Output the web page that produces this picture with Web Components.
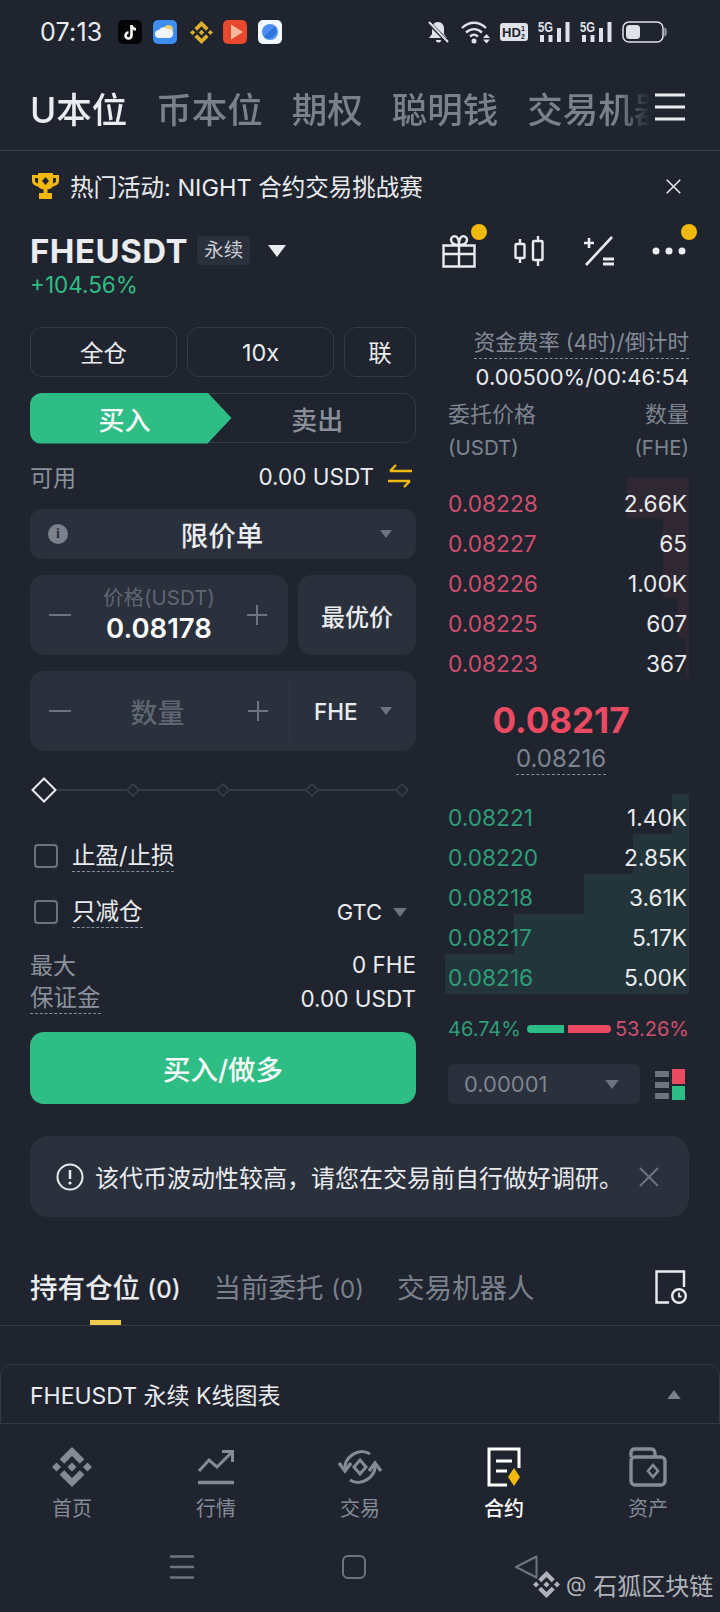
<!DOCTYPE html>
<html lang="zh-CN">
<head>
<meta charset="utf-8">
<title>FHEUSDT</title>
<style>
    html, body { margin: 0; padding: 0; }
    body {
        position: relative;
        width: 720px;
        height: 1612px;
        overflow: hidden;
        background: #1f242e;
        color: #eaecef;
        font-family: Inter, "Noto Sans CJK SC", sans-serif;
    }
    .main {
        display: grid;
        grid-template-columns: 386px 241px;
        column-gap: 32px;
        padding: 32px 0 0 30px;
    }
</style>
</head>
<body>
<status-bar></status-bar>
<top-tabs></top-tabs>
<promo-banner>热门活动: NIGHT 合约交易挑战赛</promo-banner>
<pair-header></pair-header>
<div class="main">
    <order-form></order-form>
    <order-book></order-book>
</div>
<risk-notice>该代币波动性较高，请您在交易前自行做好调研。</risk-notice>
<position-tabs></position-tabs>
<chart-bar>FHEUSDT 永续 K线图表</chart-bar>
<bottom-nav></bottom-nav>
<gesture-bar></gesture-bar>
<water-mark></water-mark>

<script>
const BNB_PATH = 'M38.73 53.2l24.59-24.58 24.6 24.6 14.3-14.31L63.32 0 24.43 38.9l14.3 14.3zM0 63.31l14.3-14.31 14.31 14.31-14.31 14.3zM38.73 73.41l24.59 24.59 24.6-24.6 14.31 14.29-38.9 38.91-38.91-38.88-.02-.02 14.33-14.29zM98.01 63.32l14.3-14.31 14.3 14.3-14.3 14.32zM77.83 63.3l-14.51-14.52-10.73 10.73-1.24 1.23-2.54 2.54 14.51 14.5 14.51-14.47v-.01z';

const caret = (w, h, color) => `<svg width="${w}" height="${h}" viewBox="0 0 12 8"><path d="M0 0H12L6 8Z" fill="${color}"/></svg>`;

const closeIcon = (size, color, sw) => `<svg width="${size}" height="${size}" viewBox="0 0 20 20"><path d="M1 1L19 19M19 1L1 19" stroke="${color}" stroke-width="${sw}" fill="none"/></svg>`;

class BaseElement extends HTMLElement {
    constructor() {
        super();
        this.attachShadow({ mode: 'open' });
    }
    connectedCallback() {
        this.render();
    }
}

class StatusBar extends BaseElement {
    render() {
        const signal = `<svg width="32" height="22" viewBox="0 0 32 22" style="overflow:visible"><text x="0" y="11" font-size="14" font-weight="700" textLength="15" lengthAdjust="spacingAndGlyphs" fill="#dfe2e8" font-family="Liberation Sans">5G</text>
            <path d="M2 14h4v7H2zM10.500 14h4v7h-4zM19 7h4v14h-4zM27.500 1h4v20h-4z" fill="#dfe2e8"/></svg>`;
        this.shadowRoot.innerHTML = `
            <style>
                :host { display: flex; align-items: center; height: 64px; box-sizing: border-box; padding: 0 0 0 40px; }
                .time { font-size: 25px; width: 78px; letter-spacing: .2px; }
                .apps { display: flex; align-items: center; }
                .apps svg { display: block; }
                .sys { display: flex; align-items: center; margin-left: auto; padding-right: 53px; gap: 10px; }
                .sys svg { display: block; }
            </style>
            <div class="time">07:13</div>
            <div class="apps">
                <svg width="24" height="24" viewBox="0 0 24 24" style="margin-right:11px"><rect width="24" height="24" rx="5" fill="#050507"/>
                    <path d="M13.500 5v10.500a3 3 0 1 1-3-3" stroke="#fff" stroke-width="2.600" fill="none"/><path d="M13.500 5.500c.5 2.500 2 3.700 4.500 4" stroke="#fff" stroke-width="2.600" fill="none"/></svg>
                <svg width="24" height="24" viewBox="0 0 24 24" style="margin-right:13px"><rect width="24" height="24" rx="5" fill="#3d8ef0"/>
                    <circle cx="15.500" cy="9.500" r="4.500" fill="#f5cf6a"/><path d="M6 18a4 4 0 0 1 0-8c1-3 6-4 8-1a4.500 4.500 0 0 1 3 9z" fill="#f2f6fc"/></svg>
                <svg width="23" height="23" viewBox="0 0 126.610 126.610" style="margin-right:10px"><path d="${BNB_PATH}" fill="#e0b02c"/></svg>
                <svg width="24" height="24" viewBox="0 0 24 24" style="margin-right:11px"><rect width="24" height="24" rx="5" fill="#e8492c"/>
                    <path d="M8 4.500L20 12L8 19.500Z" fill="#f6b9a0"/></svg>
                <svg width="24" height="24" viewBox="0 0 24 24"><rect width="24" height="24" rx="5" fill="#f4f8ff"/>
                    <circle cx="12" cy="12" r="8" fill="#4a8ff0"/><path d="M6 17L17 6a8 8 0 0 1-11 11z" fill="#2f74dc"/></svg>
            </div>
            <div class="sys">
                <svg width="21" height="24" viewBox="0 0 21 24"><path d="M10 2c-4 0-6 3-6 7v5l-3 4h18l-3-4V9c0-4-2-7-6-7zM8 20h5a2.500 2.500 0 0 1-5 0z" fill="#dfe2e8"/><path d="M1 3L20 22" stroke="#1f242e" stroke-width="4"/><path d="M1 2L20 22" stroke="#dfe2e8" stroke-width="2"/></svg>
                <svg width="29" height="24" viewBox="0 0 29 24" style="margin-left:2px"><path d="M1 8c7-7 17-7 24 0M5 12.500c5-4.500 11-4.500 16 0M9 16.500c3-2.500 5-2.500 8 0" stroke="#dfe2e8" stroke-width="2.400" fill="none"/><circle cx="13" cy="21" r="2.500" fill="#dfe2e8"/><path d="M22 18h7l-3.500-4zM22 19.500h7l-3.500 4z" fill="#dfe2e8"/></svg>
                <svg width="28" height="18" viewBox="0 0 28 18"><rect width="28" height="18" rx="3" fill="#dfe2e8"/><text x="2" y="14" font-size="13" font-weight="700" fill="#1f242e" font-family="Liberation Sans">HD</text><text x="21" y="8" font-size="7" font-weight="700" fill="#1f242e" font-family="Liberation Sans">1</text><text x="21" y="16" font-size="7" font-weight="700" fill="#1f242e" font-family="Liberation Sans">2</text></svg>
                ${signal}
                ${signal}
                <svg width="45" height="22" viewBox="0 0 45 22"><rect x="1" y="1" width="40" height="20" rx="6" stroke="#dfe2e8" stroke-width="1.500" fill="none"/><rect x="4" y="4" width="14" height="14" rx="3.500" fill="#dfe2e8"/><path d="M43 7.500c1.500.5 1.500 6.500 0 7z" stroke="#8d929b" stroke-width="1.500" fill="none"/></svg>
            </div>
        `;
    }
}

class TopTabs extends BaseElement {
    render() {
        this.shadowRoot.innerHTML = `
            <style>
                :host { display: flex; align-items: center; height: 87px; box-sizing: border-box; padding: 0 35px 0 30px; border-bottom: 1px solid #3a404c; }
                .scroll { display: flex; gap: 29px; flex: 1; overflow: hidden; white-space: nowrap; font-size: 35.500px; font-weight: 500; color: #7b818c;
                    -webkit-mask-image: linear-gradient(90deg, #000 590px, transparent 620px); mask-image: linear-gradient(90deg, #000 590px, transparent 620px); }
                .on { color: #eaecef; }
                svg { display: block; flex: none; }
            </style>
            <div class="scroll">
                <span class="on">U本位</span><span>币本位</span><span>期权</span><span>聪明钱</span><span>交易机器人</span>
            </div>
            <svg width="30" height="28" viewBox="0 0 30 28"><path d="M0 2H30M0 14H30M0 26H30" stroke="#eaecef" stroke-width="3"/></svg>
        `;
    }
}

class PromoBanner extends BaseElement {
    render() {
        this.shadowRoot.innerHTML = `
            <style>
                :host { display: flex; align-items: center; height: 74px; box-sizing: border-box; padding: 0 39px 4px 32px; }
                .text { font-size: 23.500px; color: #eaecef; margin-left: 11px; flex: 1; white-space: nowrap; }
                svg { display: block; flex: none; }
            </style>
            <svg width="27" height="26" viewBox="0 0 27 26"><path d="M6 0H21V2H27V8C27 11 24 13 21 13.500C20 15 18 16 15.500 16.500V20H20V26H7V20H11.500V16.500C9 16 7 15 6 13.500C3 13 0 11 0 8V2H6ZM3 5V8C3 9 4.500 10 6 10.500V5ZM24 5H21V10.500C22.500 10 24 9 24 8Z" fill="#f0b90b"/><path d="M13.500 4L17 8L13.500 12L10 8Z" fill="#1f242e"/></svg>
            <div class="text"><slot></slot></div>
            ${closeIcon(15, '#eaecef', 2)}
        `;
    }
}

class PairHeader extends BaseElement {
    render() {
        this.shadowRoot.innerHTML = `
            <style>
                :host { display: block; padding: 0 35px 0 30px; }
                .row { display: flex; align-items: center; height: 50px; padding-top: 1px; box-sizing: border-box; }
                .name { font-size: 33px; font-weight: 700; color: #eaecef; letter-spacing: .5px; }
                .chip { font-size: 19.500px; line-height: 29px; padding: 0 7px; margin-left: 9px; background: #2a303c; border-radius: 4px; color: #c9ccd3; }
                .row > svg.tri { margin-left: 18px; }
                .icons { display: flex; align-items: center; margin-left: auto; position: relative; }
                .icons svg { display: block; }
                .dot { position: absolute; width: 16px; height: 16px; border-radius: 50%; background: #f0b90b; top: -10px; }
                .change { font-size: 22.500px; line-height: 20px; color: #2ebd85; }
            </style>
            <div class="row">
                <span class="name">FHEUSDT</span>
                <span class="chip">永续</span>
                <svg class="tri" width="18" height="12" viewBox="0 0 12 8"><path d="M0 0H12L6 8Z" fill="#eaecef"/></svg>
                <div class="icons">
                    <svg width="34" height="34" viewBox="0 0 34 34" fill="none" stroke="#eaecef" stroke-width="2.400"><path d="M1.500 11.500H32.500V32.500H1.500ZM1.500 20H32.500M17 11.500V32.500"/><path d="M17 11C12 11 9 9 9 5.500C9 3 12 1.500 14 2.500C16 3.500 17 7 17 11C17 7 18 3.500 20 2.500C22 1.500 25 3 25 5.500C25 9 22 11 17 11Z"/></svg>
                    <svg style="margin-left:38px" width="30" height="32" viewBox="0 0 30 32" fill="none" stroke="#eaecef" stroke-width="2.400"><rect x="1.500" y="9" width="9" height="14" rx="1"/><path d="M6 4V9M6 23V28"/><rect x="19" y="6" width="9.500" height="19" rx="1"/><path d="M24 1V6M24 25V31"/></svg>
                    <svg style="margin-left:40px" width="30" height="30" viewBox="0 0 30 30" fill="none" stroke="#eaecef" stroke-width="2.600"><path d="M0 7H10M5 2V12"/><path d="M28 1L2 29"/><path d="M19 23H30M19 28H30" stroke-width="3"/></svg>
                    <svg style="margin-left:38px;margin-right:-1px" width="34" height="8" viewBox="0 0 34 8"><circle cx="4" cy="4" r="3.500" fill="#eaecef"/><circle cx="17" cy="4" r="3.500" fill="#eaecef"/><circle cx="30" cy="4" r="3.500" fill="#eaecef"/></svg>
                    <i class="dot" style="left:29px"></i>
                    <i class="dot" style="left:239px"></i>
                </div>
            </div>
            <div class="change">+104.56%</div>
        `;
    }
}

class StepField extends BaseElement {
    render() {
        const color = '#6d7480';
        this.shadowRoot.innerHTML = `
            <style>
                :host { display: flex; align-items: center; flex: 1; height: 80px; box-sizing: border-box; padding: 0 21px 0 19px; }
                svg { display: block; flex: none; }
                .mid { flex: 1; text-align: center; }
            </style>
            <svg width="22" height="20" viewBox="0 0 22 20"><path d="M0 10H22" stroke="${color}" stroke-width="2"/></svg>
            <div class="mid"><slot></slot></div>
            <svg width="20" height="20" viewBox="0 0 20 20"><path d="M0 10H20M10 0V20" stroke="${color}" stroke-width="2"/></svg>
        `;
    }
}

class CheckRow extends BaseElement {
    render() {
        this.shadowRoot.innerHTML = `
            <style>
                :host { display: flex; align-items: center; height: 56px; padding-left: 4px; }
                .box { width: 24px; height: 24px; box-sizing: border-box; border: 2px solid #6c727e; border-radius: 4px; margin-right: 14px; }
                .label { font-size: 23.500px; line-height: 30px; color: #eaecef; border-bottom: 1px dashed #848e9c; }
                .right { margin-left: auto; }
            </style>
            <div class="box"></div>
            <span class="label"><slot></slot></span>
            <div class="right"><slot name="right"></slot></div>
        `;
    }
}

class OrderForm extends BaseElement {
    render() {
        const dia = `<svg width="14" height="14" viewBox="0 0 14 14"><path d="M7 1L13 7L7 13L1 7Z" fill="#1f242e" stroke="#3a404c" stroke-width="1.500"/></svg>`;
        this.shadowRoot.innerHTML = `
            <style>
                :host { display: block; color: #eaecef; }
                svg { display: block; flex: none; }
                .modes { display: flex; gap: 10px; margin-bottom: 16px; }
                .mode { display: flex; align-items: center; justify-content: center; height: 50px; box-sizing: border-box; border: 1.500px solid #343a46; border-radius: 12px; font-size: 23.500px; flex: 0 0 147px; }
                .mode.last { flex: 0 0 72px; }
                .side { display: flex; height: 50px; box-sizing: border-box; border: 1.500px solid #343a46; border-radius: 12px; }
                .buy { flex: 0 0 202px; margin: -1.500px 0 -1.500px -1.500px; background: #2ebd85; border-radius: 12px 0 0 12px; color: #fff;
                    clip-path: polygon(0 0, 178px 0, 202px 50%, 178px 100%, 0 100%); font-size: 26px; font-weight: 500;
                    display: flex; align-items: center; justify-content: center; padding-right: 12px; box-sizing: border-box; }
                .sell { flex: 1; display: flex; align-items: center; justify-content: center; font-size: 26px; font-weight: 500; color: #8a8f99; padding-right: 12px; }
                .avail { display: flex; align-items: center; height: 66px; font-size: 22.500px; }
                .avail .k, .stat .k { color: #8b919c; font-size: 23px; }
                .avail .v { margin-left: auto; margin-right: 14px; }
                .select { display: flex; align-items: center; height: 50px; background: #2a303c; border-radius: 12px; padding: 0 24px 0 18px; font-size: 27.500px; font-weight: 500; margin-bottom: 16px; }
                .select .t { flex: 1; text-align: center; padding-right: 4px; }
                .info { width: 20px; height: 20px; border-radius: 50%; background: #7b818d; color: #2a303c; font-size: 14px; font-weight: 700; line-height: 20px; text-align: center; font-family: "Liberation Serif", serif; }
                .line { display: flex; gap: 10px; margin-bottom: 16px; }
                .field { height: 80px; background: #2a303c; border-radius: 14px; display: flex; }
                .price { flex: 0 0 258px; }
                .best { flex: 1; display: flex; align-items: center; justify-content: center; font-size: 24px; font-weight: 500; }
                .plabel { font-size: 20.500px; line-height: 26px; color: #5f6672; }
                .pvalue { font-size: 27.500px; line-height: 34px; font-weight: 600; color: #fff; }
                .qty-box { flex: 1; display: flex; }
                .qty-label { font-size: 27px; font-weight: 500; color: #5f6672; margin-right: 4px; }
                .unit { flex: 0 0 127px; display: flex; align-items: center; border-left: 1px solid #343a46; margin: 10px 0; box-sizing: border-box; padding: 0 24px 0 24px; font-size: 22.500px; font-weight: 500; }
                .unit svg { margin-left: auto; }
                .slider { display: flex; align-items: center; height: 77px; padding: 0 7px 0 1px; }
                .slider .track { flex: 1; height: 2px; background: #343a46; }
                .gtc { display: flex; align-items: center; font-size: 22px; gap: 11px; padding-right: 9px; }
                .stat { display: flex; justify-content: space-between; align-items: center; height: 33px; font-size: 22.500px; }
                .stat .d { border-bottom: 1px dashed #848e9c; line-height: 30px; font-size: 23.500px; }
                .stats { margin-top: 6px; margin-bottom: 17px; }
                .stat.first { height: 36px; }
                .submit { display: flex; align-items: center; justify-content: center; height: 72px; background: #2ebd85; border-radius: 14px; color: #fff; font-size: 27.500px; font-weight: 500; }
            </style>
            <div class="modes">
                <div class="mode">全仓</div>
                <div class="mode">10x</div>
                <div class="mode last">联</div>
            </div>
            <div class="side"><div class="buy">买入</div><div class="sell">卖出</div></div>
            <div class="avail">
                <span class="k">可用</span><span class="v">0.00 USDT</span>
                <svg width="24" height="24" viewBox="0 0 24 24" fill="none" stroke="#f0b90b" stroke-width="2.400" style="margin-right:4px"><path d="M24 7H2M8 1L2 7M0 17H22M16 23L22 17"/></svg>
            </div>
            <div class="select">
                <span class="info">i</span><span class="t">限价单</span>${caret(12, 8, '#6d7480')}
            </div>
            <div class="line">
                <div class="field price"><step-field><div class="plabel">价格(USDT)</div><div class="pvalue">0.08178</div></step-field></div>
                <div class="field best">最优价</div>
            </div>
            <div class="field">
                <div class="qty-box"><step-field><span class="qty-label">数量</span></step-field></div>
                <div class="unit">FHE${caret(12, 8, '#6d7480')}</div>
            </div>
            <div class="slider">
                <svg width="26" height="26" viewBox="0 0 26 26"><path d="M13 1.500L24.500 13L13 24.500L1.500 13Z" fill="none" stroke="#eaecef" stroke-width="2"/></svg>
                <div class="track" style="flex:0 0 69px"></div>${dia}<div class="track"></div>${dia}<div class="track"></div>${dia}<div class="track"></div>${dia}
            </div>
            <check-row>止盈/止损</check-row>
            <check-row>只减仓<div slot="right" class="gtc">GTC${caret(14, 9, '#6d7480')}</div></check-row>
            <div class="stats">
                <div class="stat first"><span class="k">最大</span><span>0 FHE</span></div>
                <div class="stat"><span class="k d">保证金</span><span>0.00 USDT</span></div>
            </div>
            <div class="submit">买入/做多</div>
        `;
    }
}

class BookRow extends BaseElement {
    render() {
        const width = this.getAttribute('depth');
        const side = this.getAttribute('side');
        const bar = side === 'ask' ? '#2f2832' : '#23343a';
        const text = side === 'ask' ? '#cf4f6e' : '#2d9e78';
        this.shadowRoot.innerHTML = `
            <style>
                :host { display: flex; justify-content: space-between; align-items: center; height: 40px; box-sizing: border-box; font-size: 22.700px;
                    margin-left: -3px; padding: ${side === 'ask' ? 10 : 6}px 2px 0 3px;
                    background: linear-gradient(${bar}, ${bar}) right top / ${width}px 100% no-repeat; }
                .p { color: ${text}; }
                .q { color: #eaecef; }
            </style>
            <span class="p">${this.getAttribute('price')}</span>
            <span class="q"><slot></slot></span>
        `;
    }
}

class OrderBook extends BaseElement {
    render() {
        this.shadowRoot.innerHTML = `
            <style>
                :host { display: block; font-size: 22px; color: #eaecef; }
                svg { display: block; flex: none; }
                .fund { display: flex; flex-direction: column; align-items: flex-end; }
                .fund .t { line-height: 31px; color: #848b97; border-bottom: 1px dashed #848e9c; font-size: 21.500px; white-space: nowrap; }
                .fund .v { line-height: 36px; font-size: 22px; white-space: nowrap; }
                .head { display: grid; grid-template-columns: 1fr auto; color: #7d8490; line-height: 33px; margin-top: 3px; margin-bottom: 14px; }
                .head :nth-child(even) { text-align: right; }
                .head .u { font-size: 20.500px; }
                .mid { height: 116px; box-sizing: border-box; padding-top: 21px; display: flex; flex-direction: column; align-items: center; }
                .big { font-size: 35px; line-height: 42px; font-weight: 700; color: #ea4a62; padding-right: 15px; }
                .sub { font-size: 24px; line-height: 30px; margin-top: 3px; margin-right: 15px; color: #7d8490; border-bottom: 1px dashed #848e9c; }
                .ratio { display: flex; align-items: center; height: 70px; font-size: 20px; }
                .ratio .g { color: #2d9e78; }
                .ratio .r { color: #cf4f6e; margin-left: auto; }
                .ratio i { display: block; height: 8px; }
                .tool { display: flex; align-items: center; }
                .step { display: flex; align-items: center; width: 192px; height: 40px; box-sizing: border-box; padding: 0 21px 0 16px; background: #2a303c; border-radius: 6px; color: #7d8490; }
                .step svg { margin-left: auto; }
            </style>
            <div class="fund">
                <span class="t">资金费率 (4时)/倒计时</span>
                <span class="v">0.00500%/00:46:54</span>
            </div>
            <div class="head"><span>委托价格</span><span>数量</span><span class="u">(USDT)</span><span class="u">(FHE)</span></div>
            <book-row side="ask" price="0.08228" depth="62">2.66K</book-row>
            <book-row side="ask" price="0.08227" depth="26">65</book-row>
            <book-row side="ask" price="0.08226" depth="26">1.00K</book-row>
            <book-row side="ask" price="0.08225" depth="11">607</book-row>
            <book-row side="ask" price="0.08223" depth="3">367</book-row>
            <div class="mid">
                <div class="big">0.08217</div>
                <div class="sub">0.08216</div>
            </div>
            <book-row side="bid" price="0.08221" depth="17">1.40K</book-row>
            <book-row side="bid" price="0.08220" depth="56">2.85K</book-row>
            <book-row side="bid" price="0.08218" depth="105">3.61K</book-row>
            <book-row side="bid" price="0.08217" depth="175">5.17K</book-row>
            <book-row side="bid" price="0.08216" depth="244">5.00K</book-row>
            <div class="ratio">
                <span class="g">46.74%</span>
                <i style="width:37px;background:#2ebd85;border-radius:4px 0 0 4px;margin-left:6px"></i>
                <i style="width:43px;background:#ea4a62;border-radius:0 4px 4px 0;margin-left:4px"></i>
                <span class="r">53.26%</span>
            </div>
            <div class="tool">
                <div class="step">0.00001${caret(14, 9, '#6d7480')}</div>
                <svg style="margin-left:15px" width="30" height="31" viewBox="0 0 30 31"><path d="M0 2H14V8H0ZM0 13H14V19H0ZM0 24H14V30H0Z" fill="#6d7480"/><rect x="17" y="0" width="13" height="15" fill="#ea4a62"/><rect x="17" y="17" width="13" height="14" fill="#2ebd85"/></svg>
            </div>
        `;
    }
}

class RiskNotice extends BaseElement {
    render() {
        this.shadowRoot.innerHTML = `
            <style>
                :host { display: flex; align-items: center; height: 81px; margin: 32px 31px 0 30px; padding: 0 30px 0 26px; background: #2a303c; border-radius: 18px; }
                svg { display: block; flex: none; }
                .t { flex: 1; margin-left: 11px; font-size: 24px; white-space: nowrap; color: #eaecef; }
            </style>
            <svg width="28" height="28" viewBox="0 0 28 28" fill="none" stroke="#eaecef" stroke-width="2"><circle cx="14" cy="14" r="12.500"/><path d="M14 7V16" stroke-width="2.500"/><circle cx="14" cy="20" r="1.600" fill="#eaecef" stroke="none"/></svg>
            <div class="t"><slot></slot></div>
            ${closeIcon(20, '#6d7480', 2)}
        `;
    }
}

class PositionTabs extends BaseElement {
    render() {
        this.shadowRoot.innerHTML = `
            <style>
                :host { display: flex; height: 109px; box-sizing: border-box; padding: 49px 33px 0 30px; border-bottom: 1px solid #343a46; }
                .tab { display: flex; flex-direction: column; align-items: center; font-size: 27.500px; line-height: 44px; color: #7b818c; margin-right: 33px; white-space: nowrap; }
                .tab.on { color: #eaecef; font-weight: 500; }
                .tab small { font-size: 24px; }
                .bar { width: 31px; height: 8px; background: #f0cc4a; margin-top: 8px; }
                svg { display: block; margin: 4px 0 0 auto; }
            </style>
            <div class="tab on"><span>持有仓位 <small>(0)</small></span><i class="bar"></i></div>
            <div class="tab"><span>当前委托 <small>(0)</small></span></div>
            <div class="tab"><span>交易机器人</span></div>
            <svg width="32" height="34" viewBox="0 0 32 34" fill="none" stroke="#eaecef" stroke-width="2.400"><path d="M14 32.500H1.500V1.500H29V17"/><circle cx="24" cy="26" r="6.800"/><path d="M24 22.500V26.500H26.500" stroke-width="1.800"/></svg>
        `;
    }
}

class ChartBar extends BaseElement {
    render() {
        this.shadowRoot.innerHTML = `
            <style>
                :host { display: flex; align-items: center; height: 60px; margin-top: 38px; box-sizing: border-box; padding: 0 38px 0 29px; border: 1px solid #343a46; border-radius: 12px 12px 0 0; font-size: 23px; color: #eaecef; }
                .t { flex: 1; }
            </style>
            <div class="t"><slot></slot></div>
            <svg width="14" height="9" viewBox="0 0 12 8"><path d="M0 8H12L6 0Z" fill="#7b818c"/></svg>
        `;
    }
}

class NavItem extends BaseElement {
    render() {
        this.shadowRoot.innerHTML = `
            <style>
                :host { display: flex; flex-direction: column; align-items: center; flex: 1; font-size: 20px; color: #848b97; }
                :host([active]) { color: #fff; font-weight: 500; }
                .ic { height: 40px; }
                .l { margin-top: 10px; line-height: 24px; }
            </style>
            <div class="ic"><slot name="icon"></slot></div>
            <div class="l"><slot></slot></div>
        `;
    }
}

class BottomNav extends BaseElement {
    render() {
        this.shadowRoot.innerHTML = `
            <style>
                :host { display: flex; padding-top: 23px; height: 106px; box-sizing: border-box; }
                svg { display: block; }
            </style>
            <nav-item>
                <svg slot="icon" width="40" height="40" viewBox="0 0 126.610 126.610"><path d="${BNB_PATH}" fill="#848b97"/></svg>首页
            </nav-item>
            <nav-item>
                <svg slot="icon" width="40" height="40" viewBox="0 0 40 40" fill="none" stroke="#848b97" stroke-width="3"><path d="M3 24L13 13L21 20L35 6"/><path d="M26 4.500H36.500V15"/><path d="M2 35.500H38" stroke-width="3.500"/></svg>行情
            </nav-item>
            <nav-item>
                <svg slot="icon" width="46" height="40" viewBox="0 0 46 40" fill="none" stroke="#848b97" stroke-width="3"><path d="M8 22C7 10 22 0 33 7"/><path d="M38 18C39 30 24 40 13 33"/><path d="M2 16L8 24L14 16M32 24L38 16L44 24" stroke-width="3.400"/><path d="M23 13L29 20L23 27L17 20Z"/></svg>交易
            </nav-item>
            <nav-item active>
                <svg slot="icon" width="36" height="40" viewBox="0 0 36 40" fill="none" stroke="#fff" stroke-width="3"><path d="M33 21V2H3V38H21"/><path d="M10 14H26M10 24H21" stroke-width="3"/><path d="M28 21L34 30L28 39L22 30Z" fill="#f0b90b" stroke="none"/></svg>合约
            </nav-item>
            <nav-item>
                <svg slot="icon" width="38" height="40" viewBox="0 0 38 40" fill="none" stroke="#848b97" stroke-width="3.400"><path d="M2 10V6C2 3.500 3.500 2 6 2H22C24.500 2 26 3.500 26 7V10"/><rect x="2" y="10" width="34" height="28" rx="4"/><path d="M24 18L29 24L24 30L19 24Z" stroke-width="2.600"/></svg>资产
            </nav-item>
        `;
    }
}

class GestureBar extends BaseElement {
    render() {
        this.shadowRoot.innerHTML = `
            <style>
                :host { display: flex; align-items: center; height: 74px; padding-left: 170px; }
                svg { display: block; }
            </style>
            <svg width="24" height="24" viewBox="0 0 24 24"><path d="M0 1.500H24M0 12H24M0 22.500H24" stroke="#6d7480" stroke-width="2.400"/></svg>
            <svg style="margin-left:148px" width="24" height="24" viewBox="0 0 24 24"><rect x="1" y="1" width="22" height="22" rx="5" fill="none" stroke="#6d7480" stroke-width="2"/></svg>
            <svg style="margin-left:148px" width="24" height="24" viewBox="0 0 24 24"><path d="M22.500 1.500V22.500L2 12Z" fill="none" stroke="#6d7480" stroke-width="2" stroke-linejoin="round"/></svg>
        `;
    }
}

class WaterMark extends BaseElement {
    render() {
        this.shadowRoot.innerHTML = `
            <style>
                :host { position: absolute; left: 533px; top: 1571px; display: flex; align-items: center; height: 27px; font-size: 24px; color: #b0b3ba; white-space: nowrap; }
                svg { display: block; margin-right: 6px; }
                .at { font-size: 21px; margin-right: 7px; }
            </style>
            <svg width="27" height="27" viewBox="0 0 126.610 126.610"><path d="${BNB_PATH}" fill="#b0b3ba"/></svg>
            <span class="at">@</span><span>石狐区块链</span>
        `;
    }
}

customElements.define('status-bar', StatusBar);
customElements.define('top-tabs', TopTabs);
customElements.define('promo-banner', PromoBanner);
customElements.define('pair-header', PairHeader);
customElements.define('step-field', StepField);
customElements.define('check-row', CheckRow);
customElements.define('order-form', OrderForm);
customElements.define('book-row', BookRow);
customElements.define('order-book', OrderBook);
customElements.define('risk-notice', RiskNotice);
customElements.define('position-tabs', PositionTabs);
customElements.define('chart-bar', ChartBar);
customElements.define('nav-item', NavItem);
customElements.define('bottom-nav', BottomNav);
customElements.define('gesture-bar', GestureBar);
customElements.define('water-mark', WaterMark);
</script>
</body>
</html>
